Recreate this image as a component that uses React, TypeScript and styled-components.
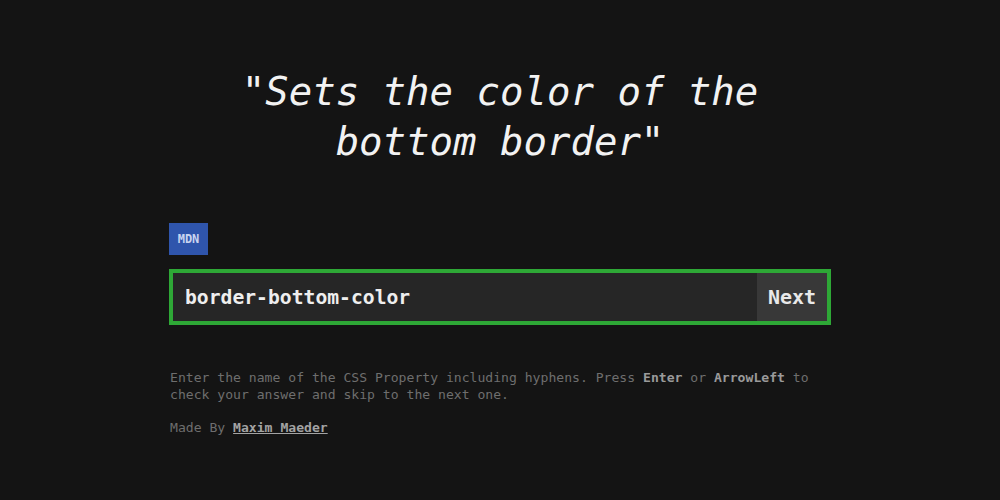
import React from "react";
import styled, { createGlobalStyle } from "styled-components";

const Global = createGlobalStyle`
  html, body { margin: 0; padding: 0; background: #141414; }
  body { font-family: "DejaVu Sans Mono", "Liberation Mono", monospace; color: #e6e6e6; }
`;

const Page = styled.main`
  width: 1000px;
  height: 500px;
  display: flex;
  justify-content: center;
  box-sizing: border-box;
  padding-top: 67px;
`;

const Column = styled.div`
  width: 662px;
  display: flex;
  flex-direction: column;
`;

const Quote = styled.h1`
  margin: 0;
  font-size: 39px;
  line-height: 50px;
  font-style: italic;
  font-weight: normal;
  text-align: center;
  color: #f2f2f2;
`;

const Badge = styled.a`
  align-self: flex-start;
  margin-top: 56px;
  width: 39px;
  height: 32px;
  display: flex;
  align-items: center;
  justify-content: center;
  background: #2f55ac;
  color: #c9d4f0;
  font-size: 12px;
  font-weight: bold;
  text-decoration: none;
  box-sizing: border-box;
`;

const Field = styled.div`
  margin-top: 14px;
  height: 56px;
  box-sizing: border-box;
  border: 4px solid #2ea836;
  display: flex;
  background: #262626;
`;

const Input = styled.div`
  flex: 1;
  display: flex;
  align-items: center;
  padding-left: 12px;
  font-size: 19.7px;
  font-weight: bold;
  color: #eeeeee;
`;

const NextButton = styled.button`
  width: 70px;
  border: none;
  background: #383838;
  color: #e8e8e8;
  font-family: inherit;
  font-size: 20px;
  font-weight: bold;
  padding: 0;
`;

const Help = styled.p<{ $top: number }>`
  margin: ${(p) => p.$top}px 0 0 1px;
  font-size: 13.1px;
  line-height: 16.5px;
  color: #6e6e6e;
`;

const Key = styled.strong`
  color: #9a9a9a;
`;

const Author = styled.a`
  color: #a3a3a3;
  font-weight: bold;
  text-decoration: underline;
`;

export default function App() {
  return (
    <>
      <Global />
      <Page>
        <Column>
          <Quote>"Sets the color of the bottom border"</Quote>
          <Badge href="#">MDN</Badge>
          <Field>
            <Input>border-bottom-color</Input>
            <NextButton>Next</NextButton>
          </Field>
          <Help $top={45}>
            Enter the name of the CSS Property including hyphens. Press <Key>Enter</Key> or{" "}
            <Key>ArrowLeft</Key> to check your answer and skip to the next one.
          </Help>
          <Help $top={17}>
            Made By <Author href="#">Maxim Maeder</Author>
          </Help>
        </Column>
      </Page>
    </>
  );
}
